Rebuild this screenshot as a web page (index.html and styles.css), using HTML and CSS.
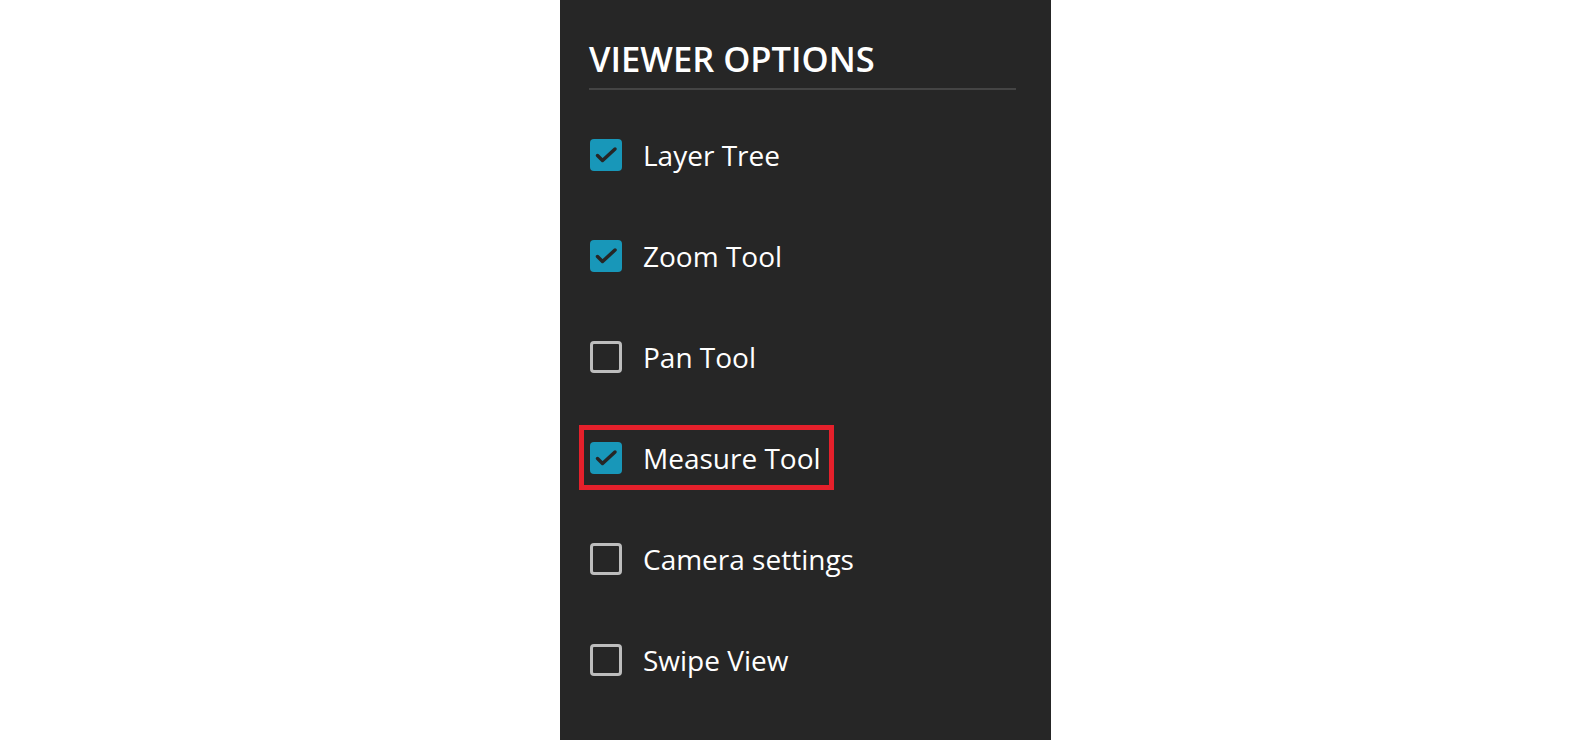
FILE: index.html
```html
<!DOCTYPE html>
<html lang="en">
<head>
  <meta charset="UTF-8" />
  <meta name="viewport" content="width=device-width, initial-scale=1.0">
  <title>Viewer Options</title>
  <link rel="stylesheet" href="styles.css">
</head>
<body>
  <div class="options-panel">
    <div class="panel-title">VIEWER OPTIONS</div>
    <ul class="option-list">
      <li class="option-row">
        <label class="option">
          <span class="box checked">
            <svg viewBox="0 0 32 32"><path d="M7.5 16.5 L12.5 21.5 L25 10" /></svg>
          </span>
          <span class="option-text">Layer Tree</span>
        </label>
      </li>
      <li class="option-row">
        <label class="option">
          <span class="box checked">
            <svg viewBox="0 0 32 32"><path d="M7.5 16.5 L12.5 21.5 L25 10" /></svg>
          </span>
          <span class="option-text">Zoom Tool</span>
        </label>
      </li>
      <li class="option-row">
        <label class="option">
          <span class="box"></span>
          <span class="option-text">Pan Tool</span>
        </label>
      </li>
      <li class="option-row">
        <!-- highlighted item -->
        <label class="option highlight">
          <span class="box checked">
            <svg viewBox="0 0 32 32"><path d="M7.5 16.5 L12.5 21.5 L25 10" /></svg>
          </span>
          <span class="option-text">Measure Tool</span>
        </label>
      </li>
      <li class="option-row">
        <label class="option">
          <span class="box"></span>
          <span class="option-text">Camera settings</span>
        </label>
      </li>
      <li class="option-row">
        <label class="option">
          <span class="box"></span>
          <span class="option-text">Swipe View</span>
        </label>
      </li>
    </ul>
  </div>
</body>
</html>
```

FILE: styles.css
```css
/* Reset */
* { margin: 0; padding: 0; box-sizing: border-box; }
body {
  font-family: 'Open Sans', 'Liberation Sans', sans-serif;
  background: #fff;
  min-height: 100vh;
  overflow: hidden;
}
/* Side panel */
.options-panel {
  width: 491px;
  height: 740px;
  margin-left: 560px;
  background: #262626;
  padding: 35px 35px 0 29px;
  color: #fff;
}
.panel-title {
  font-size: 34.5px;
  font-weight: 600;
  line-height: 47px;
  padding-bottom: 6px;
  border-bottom: 2px solid #444;
}
.option-list {
  list-style: none;
  margin-top: 14px;
}
.option-row {
  height: 101px;
  display: flex;
  align-items: center;
  padding-left: 1px;
}
.option {
  position: relative;
  display: inline-flex;
  align-items: center;
  gap: 21px;
  cursor: pointer;
}
.box {
  width: 32px;
  height: 32px;
  border: 3px solid #bdbdbd;
  border-radius: 4px;
  display: flex;
}
.box.checked {
  background: #1897b9;
  border: none;
}
.box svg {
  width: 32px;
  height: 32px;
  fill: none;
  stroke: #262626;
  stroke-width: 3.5;
  stroke-linecap: round;
  stroke-linejoin: round;
}
.option-text {
  font-size: 28px;
  line-height: 32px;
  color: #fff;
}
/* Red annotation frame */
.highlight::after {
  content: "";
  position: absolute;
  top: -17px;
  bottom: -16px;
  left: -11px;
  right: -13px;
  border: 5px solid #e5202b;
}
```
